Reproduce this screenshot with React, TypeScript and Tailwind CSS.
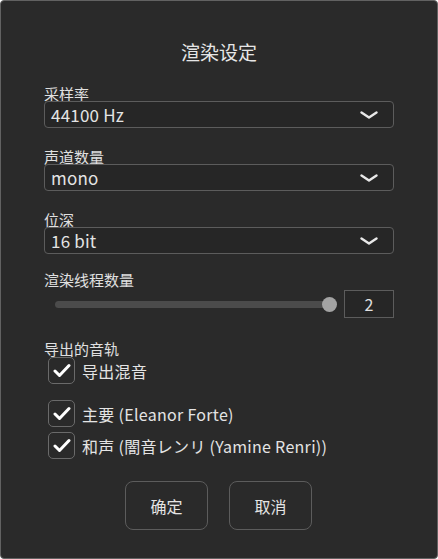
import React from 'react'

const font = { fontFamily: '"Noto Sans CJK SC", "Noto Sans CJK JP", "Noto Sans", sans-serif' }

const Chevron = () => (
    <svg width="18" height="8" viewBox="0 0 18 8" fill="none">
        <path d="M1.5 1.5 L9 6.5 L16.5 1.5" stroke="#e8e8e8" strokeWidth="2.4" strokeLinecap="round" strokeLinejoin="round" />
    </svg>
)

const Select = ({ value }: { value: string }) => (
    <div className="flex h-[27px] items-center justify-between rounded-[4px] border border-[#5c5c5c] bg-[#262626] pl-[6px] pr-[15px]">
        <span className="text-[17px] leading-[20px] tracking-[0.2px] text-[#e4e4e4]">{value}</span>
        <Chevron />
    </div>
)

const Check = ({ label }: { label: string }) => (
    <div className="ml-[4px] flex h-[27px] items-center gap-[7px]">
        <div className="flex h-[27px] w-[27px] items-center justify-center rounded-[5px] border border-[#6a6a6a]">
            <svg width="18" height="15" viewBox="0 0 18 15" fill="none">
                <path d="M2 8 L6.5 12.5 L16 2.5" stroke="#ffffff" strokeWidth="3" strokeLinecap="round" strokeLinejoin="round" />
            </svg>
        </div>
        <span className="text-[16px] leading-[20px] tracking-[0.3px] text-[#e4e4e4]">{label}</span>
    </div>
)

const App = () => {
    return (
        <div style={font} className="h-[559px] w-[438px] overflow-hidden rounded-[4px] border border-[#626262] bg-[#2a2a2a] text-[#e0e0e0]">
            <div className="flex flex-col px-[43px] pt-[39px]">
                <div className="text-center text-[19px] leading-[24px] text-[#e6e6e6]">渲染设定</div>

                <div className="mt-[22px] text-[15px] leading-[15px]">采样率</div>
                <Select value="44100 Hz" />

                <div className="mt-[21px] text-[15px] leading-[15px]">声道数量</div>
                <Select value="mono" />

                <div className="mt-[21px] text-[15px] leading-[15px]">位深</div>
                <Select value="16 bit" />

                <div className="mt-[18px] text-[15px] leading-[15px]">渲染线程数量</div>
                <div className="mt-[3px] flex h-[28px] items-center">
                    <div className="ml-[11px] flex flex-1 items-center">
                        <div className="h-[7px] flex-1 rounded-l-full bg-[#4b4b4b]" />
                        <div className="-ml-[7px] h-[15px] w-[15px] rounded-full bg-[#a3a3a3]" />
                    </div>
                    <div className="ml-[7px] flex h-[28px] w-[50px] items-center justify-center border border-[#5c5c5c] bg-[#262626] text-[16px]">2</div>
                </div>

                <div className="mt-[23px] text-[15px] leading-[15px]">导出的音轨</div>
                <div className="mt-[1px]">
                    <Check label="导出混音" />
                </div>
                <div className="mt-[16px]">
                    <Check label="主要 (Eleanor Forte)" />
                </div>
                <div className="mt-[5px]">
                    <Check label="和声 (闇音レンリ (Yamine Renri))" />
                </div>

                <div className="ml-[81px] mt-[22px] flex gap-[21px]">
                    <button className="flex h-[49px] w-[83px] items-center justify-center rounded-[8px] border border-[#5c5c5c] text-[16px] text-[#e4e4e4]">确定</button>
                    <button className="flex h-[49px] w-[83px] items-center justify-center rounded-[8px] border border-[#5c5c5c] text-[16px] text-[#e4e4e4]">取消</button>
                </div>
            </div>
        </div>
    )
}

export default App
